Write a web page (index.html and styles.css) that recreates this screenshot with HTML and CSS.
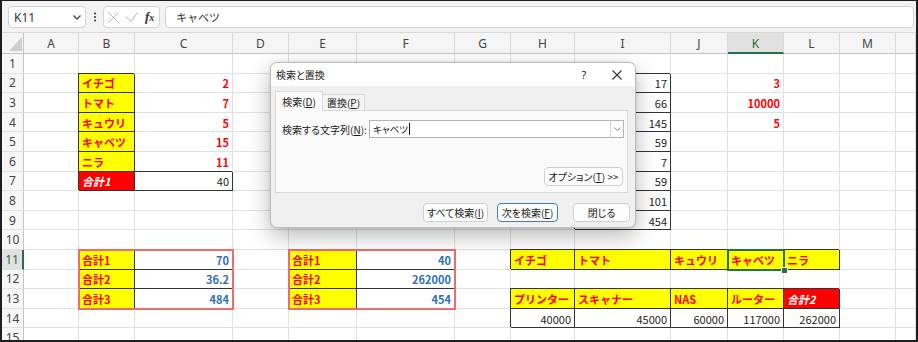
FILE: index.html
```html
<!DOCTYPE html>
<html lang="ja">
<head>
    <meta charset="UTF-8">
    <title>検索と置換</title>
    <link rel="stylesheet" href="styles.css">
</head>
<body>

<div class="window">
    <div class="formula-bar">
        <div class="name-box">
            <span>K11</span>
            <svg width="8" height="5" viewBox="0 0 8 5"><polyline points="0.5,0.5 4,4 7.5,0.5" fill="none" stroke="#444" stroke-width="1.3"/></svg>
        </div>
        <svg class="dots" width="4" height="10" viewBox="0 0 4 10"><circle cx="2" cy="1.5" r="1.1" fill="#444"/><circle cx="2" cy="5" r="1.1" fill="#444"/><circle cx="2" cy="8.5" r="1.1" fill="#444"/></svg>
        <div class="fx-box">
            <svg width="11" height="11" viewBox="0 0 11 11"><path d="M0.5 0.5L10.5 10.5M10.5 0.5L0.5 10.5" stroke="#b4b4b4" stroke-width="1"/></svg>
            <svg width="13" height="10" viewBox="0 0 13 10"><polyline points="0.5,4.5 6,9.3 12.5,0.5" fill="none" stroke="#b4b4b4" stroke-width="1"/></svg>
            <span class="fx">f<span>x</span></span>
        </div>
        <div class="formula-input">キャベツ</div>
    </div>

    <div class="sheet">
        <div class="grid" id="grid"></div>
        <div class="marks">
            <div class="frame frame-b"></div>
            <div class="frame frame-e"></div>
            <div class="active-cell"></div>
        </div>
    </div>

    <div class="dialog">
        <div class="dlg-title">
            <span class="dlg-caption">検索と置換</span>
            <span class="dlg-help">?</span>
            <span class="dlg-close"><svg width="10" height="10" viewBox="0 0 10 10"><path d="M0.5 0.5L9.5 9.5M9.5 0.5L0.5 9.5" stroke="#333" stroke-width="1.1"/></svg></span>
        </div>
        <div class="dlg-body">
            <div class="tabs">
                <div class="tab active">検索(<u>D</u>)</div>
                <div class="tab">置換(<u>P</u>)</div>
            </div>
            <div class="panel">
                <div class="find-row">
                    <label class="find-label">検索する文字列(<u>N</u>):</label>
                    <div class="combo">
                        <span class="combo-text">キャベツ</span><span class="caret"></span>
                        <span class="combo-btn"><svg width="7" height="4" viewBox="0 0 7 4"><polyline points="0.5,0.5 3.5,3.5 6.5,0.5" fill="none" stroke="#8a8a8a" stroke-width="1"/></svg></span>
                    </div>
                </div>
                <button class="btn btn-opt">オプション(<u>T</u>) &gt;&gt;</button>
            </div>
            <div class="dlg-buttons">
                <button class="btn btn-all">すべて検索(<u>I</u>)</button>
                <button class="btn btn-next">次を検索(<u>F</u>)</button>
                <button class="btn btn-close">閉じる</button>
            </div>
        </div>
    </div>
</div>

<script>
var cols = ['A','B','C','D','E','F','G','H','I','J','K','L','M','N'];

// lab = 黄色の見出し, red = 赤の数値, tot = 赤い合計, nb = 罫線付き数値, blue = 青の数値
var cells = {
    B2: ['イチゴ', 'lab'],   C2: ['2', 'red'],
    B3: ['トマト', 'lab'],   C3: ['7', 'red'],
    B4: ['キュウリ', 'lab'], C4: ['5', 'red'],
    B5: ['キャベツ', 'lab'], C5: ['15', 'red'],
    B6: ['ニラ', 'lab'],     C6: ['11', 'red'],
    B7: ['合計1', 'tot'],    C7: ['40', 'nb'],
    I2: ['17', 'nb'], I3: ['66', 'nb'], I4: ['145', 'nb'], I5: ['59', 'nb'],
    I6: ['7', 'nb'],  I7: ['59', 'nb'], I8: ['101', 'nb'], I9: ['454', 'nb'],
    K2: ['3', 'red'], K3: ['10000', 'red'], K4: ['5', 'red'],
    B11: ['合計1', 'lab'], C11: ['70', 'blue'],
    B12: ['合計2', 'lab'], C12: ['36.2', 'blue'],
    B13: ['合計3', 'lab'], C13: ['484', 'blue'],
    E11: ['合計1', 'lab'], F11: ['40', 'blue'],
    E12: ['合計2', 'lab'], F12: ['262000', 'blue'],
    E13: ['合計3', 'lab'], F13: ['454', 'blue'],
    H11: ['イチゴ', 'lab'], I11: ['トマト', 'lab'], J11: ['キュウリ', 'lab'],
    K11: ['キャベツ', 'lab'], L11: ['ニラ', 'lab'],
    H13: ['プリンター', 'lab'], I13: ['スキャナー', 'lab'], J13: ['NAS', 'lab'],
    K13: ['ルーター', 'lab'], L13: ['合計2', 'tot'],
    H14: ['40000', 'nb'], I14: ['45000', 'nb'], J14: ['60000', 'nb'],
    K14: ['117000', 'nb'], L14: ['262000', 'nb']
};

var html = '<div class="corner"><svg width="13" height="14" viewBox="0 0 13 14"><polygon points="13,0 13,14 0,14" fill="#cdcdcd"/></svg></div>';
cols.forEach(function (c) {
    html += '<div class="colhead' + (c === 'K' ? ' sel' : '') + '">' + (c === 'N' ? '' : c) + '</div>';
});
for (var r = 1; r <= 15; r++) {
    html += '<div class="rowhead' + (r === 11 ? ' sel' : '') + '">' + r + '</div>';
    cols.forEach(function (c) {
        var v = cells[c + r];
        html += v ? '<div class="cell ' + v[1] + '">' + v[0] + '</div>' : '<div class="cell"></div>';
    });
}
document.getElementById('grid').innerHTML = html;
</script>

</body>
</html>
```

FILE: styles.css
```css
body {
    margin: 0;
    background: #fff;
    font-family: "Noto Sans", "Noto Sans CJK JP", sans-serif;
    color: #222;
}
.window {
    position: relative;
    width: 918px;
    height: 342px;
    box-sizing: border-box;
    border: 2px solid #1e1e1e;
    border-top-width: 1px;
    overflow: hidden;
    background: #fff;
}

/* 数式バー */
.formula-bar {
    height: 32px;
    box-sizing: border-box;
    display: flex;
    align-items: flex-start;
    padding: 5px 2px 0 6px;
    background: #f3f3f3;
    border-bottom: 1px solid #d8d8d8;
}
.name-box, .fx-box, .formula-input {
    height: 22px;
    box-sizing: border-box;
    background: #fff;
    border: 1px solid #d3d3d3;
    border-radius: 4px;
    display: flex;
    align-items: center;
}
.name-box {
    width: 78px;
    padding: 0 4px 0 5px;
    justify-content: space-between;
    font-size: 12px;
    color: #333;
}
.dots {
    margin: 6px 6px 0 7px;
}
.fx-box {
    width: 57px;
    padding: 0 4px;
    gap: 6px;
}
.fx {
    font-family: "Liberation Serif", serif;
    font-style: italic;
    font-weight: bold;
    font-size: 13px;
    color: #333;
    margin-left: 1px;
}
.fx span {
    font-size: 10px;
}
.formula-input {
    flex: 1;
    margin-left: 5px;
    padding-left: 10px;
    font-family: "Noto Sans CJK JP", sans-serif;
    font-size: 11px;
    color: #333;
}

/* シート */
.sheet {
    --cols: 22px 55px 56px 98px 56px 68px 98px 56px 64px 96px 57px 56px 56px 56px 1fr;
    --rows: 21px repeat(15, 19.6px);
    position: relative;
    height: 307px;
    overflow: hidden;
}
.grid, .marks {
    display: grid;
    grid-template-columns: var(--cols);
    grid-template-rows: var(--rows);
}
.marks {
    position: absolute;
    inset: 0;
    pointer-events: none;
}
.corner, .colhead {
    background: #f5f5f5;
    border-bottom: 1px solid #c4c4c4;
    border-right: 1px solid #dadada;
    box-sizing: border-box;
}
.corner {
    display: flex;
    align-items: flex-end;
    justify-content: flex-end;
    padding: 0 1px 2px 0;
    border-right-color: #c4c4c4;
}
.colhead {
    display: flex;
    align-items: center;
    justify-content: center;
    font-size: 12px;
    color: #444;
    padding-top: 1px;
}
.colhead.sel {
    background: #e1e1e1;
    color: #1d6b40;
    border-bottom: 2px solid #217346;
}
.rowhead {
    background: #f7f7f7;
    border-right: 1px solid #c4c4c4;
    border-bottom: 1px solid #e2e2e2;
    box-sizing: border-box;
    display: flex;
    align-items: center;
    justify-content: center;
    font-size: 12px;
    color: #444;
}
.rowhead.sel {
    background: #e1e1e1;
    color: #1d6b40;
    border-right: 2px solid #217346;
}
.cell {
    box-sizing: border-box;
    border-right: 1px solid #e1e1e1;
    border-bottom: 1px solid #e1e1e1;
    padding: 1px 3px 0;
    display: flex;
    align-items: center;
    white-space: nowrap;
    font-family: "Noto Sans CJK JP", sans-serif;
    font-size: 11px;
}

/* 罫線付きセル: 左と上は隣のセルの線に重ねる */
.lab, .tot, .nb, .blue {
    border-right-color: #333;
    border-bottom-color: #333;
    box-shadow: -1px -1px 0 #333;
}
.lab {
    background: #ffff00;
    color: #ff0000;
    font-weight: bold;
}
.tot {
    background: #ff0000;
    color: #fff;
    font-weight: bold;
    font-style: italic;
}
.red {
    justify-content: flex-end;
    color: #ff0000;
    font-weight: bold;
}
.nb {
    justify-content: flex-end;
    color: #222;
}
.blue {
    justify-content: flex-end;
    color: #2e6fba;
    font-weight: bold;
}

.frame {
    margin: -1px;
    border: 2px solid #f26a6a;
}
.frame-b {
    grid-column: 3 / 5;
    grid-row: 12 / 15;
}
.frame-e {
    grid-column: 6 / 8;
    grid-row: 12 / 15;
}
.active-cell {
    grid-column: 12 / 13;
    grid-row: 12 / 13;
    margin: -1px;
    border: 2px solid #217346;
    position: relative;
}
.active-cell::after {
    content: "";
    position: absolute;
    right: -5px;
    bottom: -5px;
    width: 5px;
    height: 5px;
    background: #217346;
    border: 1px solid #fff;
}

/* 検索と置換ダイアログ */
.dialog {
    position: absolute;
    left: 268px;
    top: 61px;
    width: 366px;
    height: 166px;
    box-sizing: border-box;
    border: 1px solid #bdbdbd;
    border-radius: 7px;
    overflow: hidden;
    background: #f0f0f0;
    box-shadow: 0 8px 22px rgba(0, 0, 0, 0.28), 0 0 3px rgba(0, 0, 0, 0.12);
    font-family: "Noto Sans CJK JP", sans-serif;
    font-feature-settings: "palt";
    font-size: 10px;
    color: #1a1a1a;
}
.dlg-title {
    height: 23px;
    background: #fff;
    display: flex;
    align-items: center;
    padding-left: 5px;
}
.dlg-caption {
    flex: 1;
}
.dlg-help, .dlg-close {
    display: flex;
    justify-content: center;
    font-family: "Noto Sans", sans-serif;
    font-size: 11px;
}
.dlg-help {
    width: 30px;
}
.dlg-close {
    width: 36px;
}
.dlg-body {
    padding: 5px 7px 0 4px;
}
.tabs {
    display: flex;
    align-items: flex-end;
    height: 19px;
}
.tab {
    box-sizing: border-box;
    width: 42px;
    height: 16px;
    background: #f4f4f4;
    border: 1px solid #d9d9d9;
    border-left: none;
    border-bottom: none;
    display: flex;
    align-items: center;
    justify-content: center;
}
.tab.active {
    position: relative;
    z-index: 1;
    width: 48px;
    height: 20px;
    margin-bottom: -1px;
    background: #fafafa;
    border-left: 1px solid #d9d9d9;
    padding-bottom: 1px;
}
.panel {
    height: 83px;
    box-sizing: border-box;
    background: #fafafa;
    border: 1px solid #d9d9d9;
    padding: 9px 3px 6px 6px;
    display: flex;
    flex-direction: column;
}
.find-row {
    display: flex;
    align-items: center;
}
.find-label {
    width: 87px;
}
.combo {
    flex: 1;
    height: 18px;
    box-sizing: border-box;
    background: #fff;
    border: 1px solid #b3b3b3;
    display: flex;
    align-items: center;
    padding-left: 3px;
}
.combo-text {
    font-size: 9.5px;
}
.caret {
    width: 1px;
    height: 12px;
    background: #111;
    margin-left: 1px;
}
.combo-btn {
    margin-left: auto;
    width: 12px;
    height: 100%;
    border-left: 1px solid #d0d0d0;
    display: flex;
    align-items: center;
    justify-content: center;
}
.btn {
    box-sizing: border-box;
    height: 19px;
    padding: 0;
    background: #fdfdfd;
    border: 1px solid #cfcfcf;
    border-radius: 4px;
    font-family: inherit;
    font-feature-settings: "palt";
    font-size: 10px;
    color: #1a1a1a;
}
.btn-opt {
    margin-top: auto;
    align-self: flex-end;
    width: 79px;
    margin-right: 1px;
}
.dlg-buttons {
    display: flex;
    justify-content: flex-end;
    margin: 10px -2px 0 0;
}
.btn-all {
    width: 65px;
}
.btn-next {
    width: 61px;
    margin-left: 9px;
    border-color: #3c7fc4;
}
.btn-close {
    width: 57px;
    margin-left: 15px;
}
```
